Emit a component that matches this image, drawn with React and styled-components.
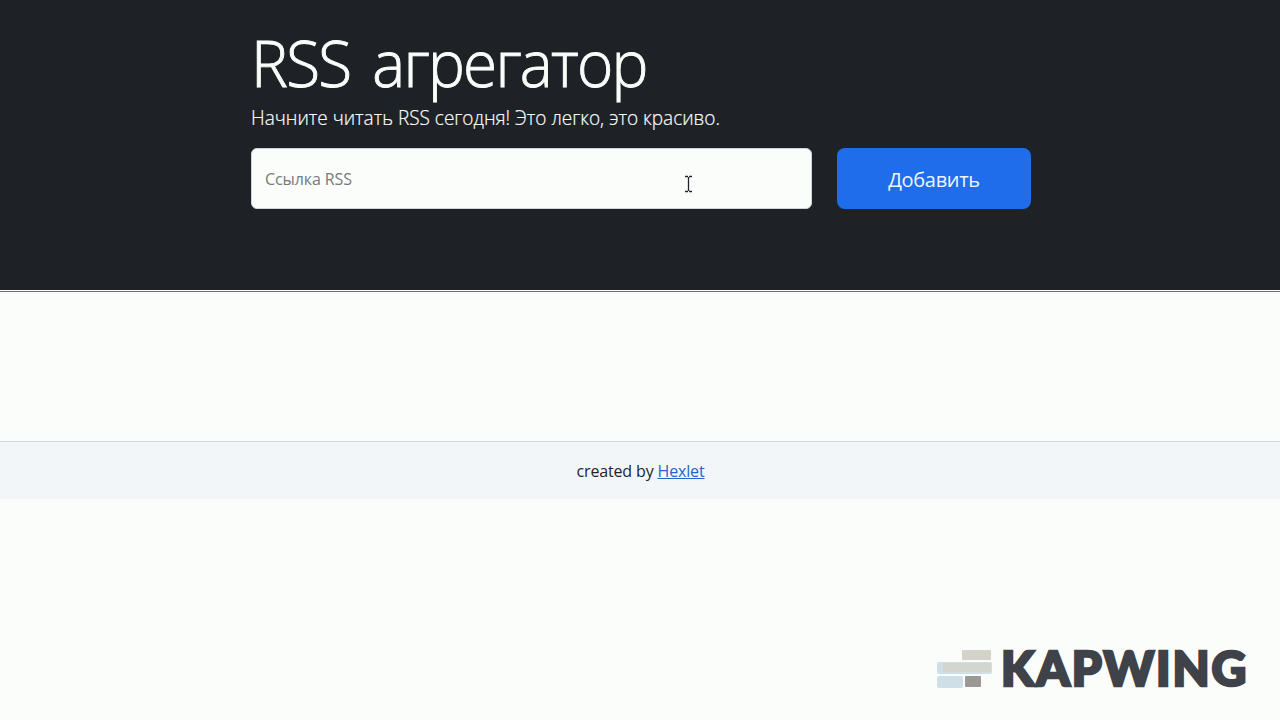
import React from "react";
import styled, { createGlobalStyle } from "styled-components";

const GlobalStyle = createGlobalStyle`
  *, *::before, *::after { box-sizing: border-box; }
  body {
    margin: 0;
    background: #fbfdfb;
    color: #212529;
    font-family: "Segoe UI", "Open Sans", "Noto Sans", sans-serif;
    font-size: 16px;
    line-height: 24px;
  }
`;

const Page = styled.div`
  position: relative;
  display: flex;
  flex-direction: column;
  height: 720px;
  overflow: hidden;
`;

const Hero = styled.header`
  height: 290px;
  padding: 23px 0 0 251px;
  background: #1e2226;
  color: #fbfdfb;
`;

const Title = styled.h1`
  width: max-content;
  margin: 0;
  height: 81px;
  font-size: 65px;
  font-weight: 300;
  line-height: 79px;
  letter-spacing: -1.8px;
  word-spacing: 8px;
  white-space: nowrap;
  transform: scaleX(0.954);
  transform-origin: left;
  -webkit-text-stroke: 0.9px currentColor;
`;

const Lead = styled.p`
  width: max-content;
  margin: 0;
  height: 44px;
  font-size: 19.5px;
  font-weight: 300;
  line-height: 28px;
  white-space: nowrap;
  transform: scaleX(0.975);
  transform-origin: left;
  -webkit-text-stroke: 0.2px currentColor;
`;

const Form = styled.form`
  display: flex;
  gap: 25px;
`;

const Field = styled.div`
  position: relative;
  width: 561px;
`;

const Input = styled.input`
  display: block;
  width: 100%;
  height: 61px;
  padding: 0 13px;
  border: 1px solid #ced4da;
  border-radius: 6px;
  background: #fbfdfb;
  font: inherit;
  outline: none;
  &::placeholder { color: #757a7e; opacity: 1; letter-spacing: -0.1px; }
`;

const Pointer = styled.svg`
  position: absolute;
  left: 433px;
  top: 27px;
  width: 9px;
  height: 18px;
`;

const Submit = styled.button`
  width: 194px;
  height: 61px;
  padding: 2px 0 0;
  border: 0;
  border-radius: 8px;
  background: #206dec;
  color: #eef5fb;
  font: inherit;
  font-size: 20px;
  letter-spacing: -0.3px;
`;

const Feeds = styled.main`
  height: 150px;
  margin-top: 1px;
  border-top: 1px solid #6f7376;
`;

const Footer = styled.footer`
  height: 58px;
  padding: 17px 0 0 1px;
  border-top: 1px solid #d0d9df;
  background: #f3f6f9;
  text-align: center;
`;

const Credit = styled.span`
  letter-spacing: -0.15px;
`;

const Link = styled.a`
  color: #2863cc;
  text-decoration: underline;
`;

const Watermark = styled.div`
  position: absolute;
  left: 937px;
  top: 644px;
  display: flex;
  align-items: center;
  height: 48px;
`;

const Bars = styled.svg`
  width: 56px;
  height: 48px;
  margin-right: 8px;
`;

const Brand = styled.span`
  color: #3f4248;
  font-family: Lato, sans-serif;
  font-size: 48px;
  font-weight: 900;
  line-height: 46px;
  letter-spacing: 1.8px;
  -webkit-text-stroke: 2.6px currentColor;
`;

export default function App() {
  return (
    <Page>
      <GlobalStyle />
      <Hero>
        <Title>RSS агрегатор</Title>
        <Lead>Начните читать RSS сегодня! Это легко, это красиво.</Lead>
        <Form>
          <Field>
            <Input placeholder="Ссылка RSS" />
            <Pointer viewBox="0 0 9 18" aria-hidden="true">
              <path d="M1 1.5H4M5 1.5H8M4.5 2V16M1 16.5H4M5 16.5H8" stroke="#202328" strokeWidth="1.3" fill="none" />
            </Pointer>
          </Field>
          <Submit type="button">Добавить</Submit>
        </Form>
      </Hero>
      <Feeds />
      <Footer>
        <Credit>created by <Link href="#">Hexlet</Link></Credit>
      </Footer>
      <Watermark>
        <Bars viewBox="0 0 56 48" aria-hidden="true">
          <rect x="25" y="6" width="29" height="10" rx="1" fill="#d4d3ca" />
          <rect x="0" y="18" width="55" height="12" rx="2" fill="#cfdfe7" />
          <rect x="6" y="19" width="48" height="9" rx="1" fill="#d3d5cf" />
          <rect x="0" y="32" width="26" height="12" rx="2" fill="#cfdfe7" />
          <rect x="28" y="32" width="16" height="11" rx="1" fill="#9c9895" />
        </Bars>
        <Brand>KAPWING</Brand>
      </Watermark>
    </Page>
  );
}
